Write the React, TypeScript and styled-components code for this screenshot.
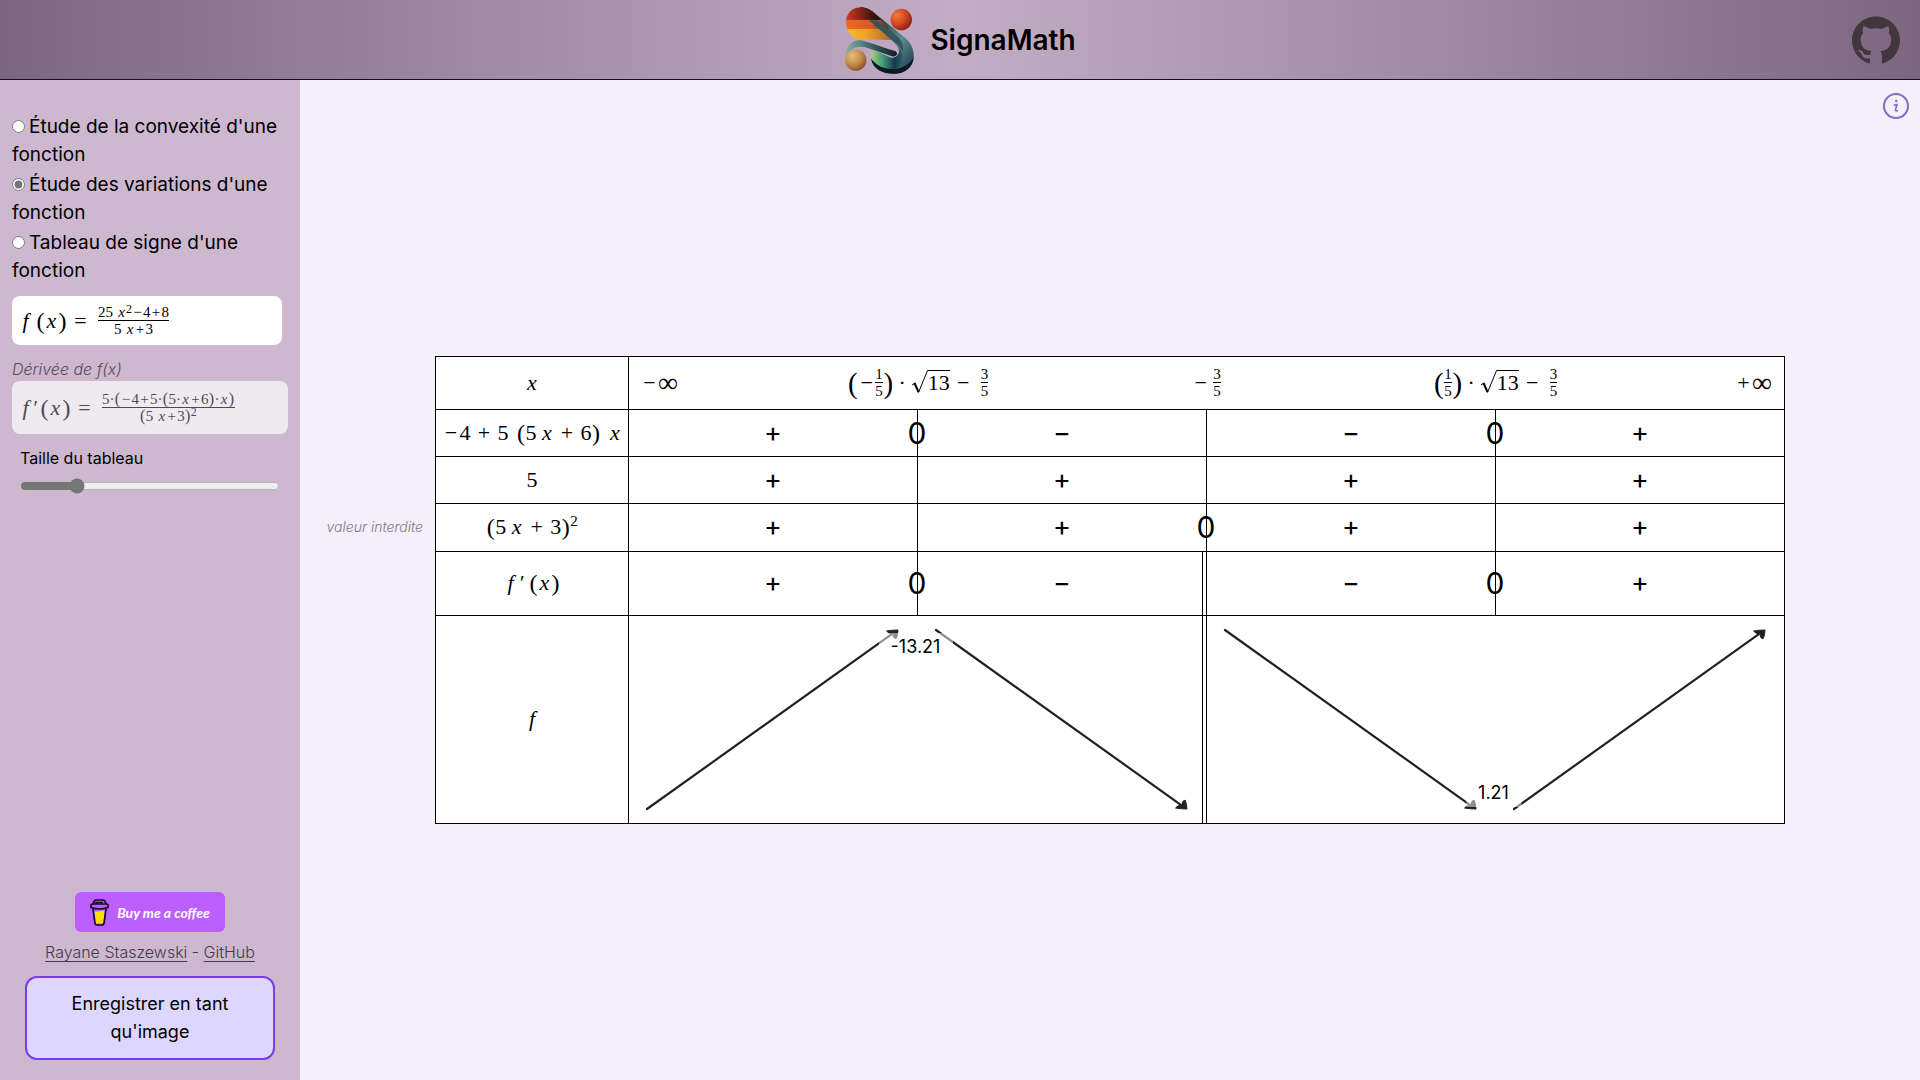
import React, { useState } from "react";
import styled, { createGlobalStyle, css } from "styled-components";

const GlobalStyle = createGlobalStyle`
  *, *::before, *::after { box-sizing: border-box; }
  body {
    margin: 0;
    font-family: Inter, "Liberation Sans", sans-serif;
    color: #000;
    background: #f5eefb;
  }
`;

const Page = styled.div`
  min-height: 100vh;
  display: flex;
  flex-direction: column;
`;

/* ---------- header ---------- */

const Header = styled.header`
  height: 80px;
  flex: none;
  display: grid;
  grid-template-columns: 1fr auto 1fr;
  align-items: center;
  padding: 0 20px;
  border-bottom: 1px solid #111020;
  background: linear-gradient(90deg, #7d667f, #c3adc5 50%, #7d667f);
`;

const Brand = styled.h1`
  grid-column: 2;
  display: flex;
  align-items: center;
  gap: 16px;
  margin: 0;
  font-size: 28px;
  line-height: 40px;
  font-weight: 600;
`;

const RepoLink = styled.a`
  justify-self: end;
  display: flex;
  color: #42363f;
`;

/* ---------- sidebar ---------- */

const Body = styled.div`
  flex: 1;
  display: flex;
`;

const Sidebar = styled.aside`
  width: 300px;
  flex: none;
  display: flex;
  flex-direction: column;
  padding: 33px 12px 20px;
  background: #cdb8cf;
`;

const Modes = styled.fieldset`
  border: 0;
  margin: 0 0 11px;
  padding: 0;
  display: flex;
  flex-direction: column;
  gap: 2px;
`;

const ModeLabel = styled.label`
  font-size: 19px;
  line-height: 28px;
`;

const Radio = styled.input`
  width: 13px;
  height: 13px;
  margin: 0 4px 0 0;
  accent-color: #767676;
`;

const FormulaBox = styled.div<{ $muted?: boolean }>`
  display: flex;
  align-items: center;
  height: ${(p) => (p.$muted ? 53 : 49)}px;
  margin-right: ${(p) => (p.$muted ? 0 : 6)}px;
  padding: 0 7px;
  border-radius: 8px;
  color: ${(p) => (p.$muted ? "#4f4a51" : "#000")};
  background: ${(p) => (p.$muted ? "#efe9f0" : "#fff")};
`;

const Caption = styled.p`
  margin: 12px 0 0;
  font-size: 16px;
  line-height: 24px;
  font-style: italic;
  font-weight: 300;
  color: #574d5a;
`;

const SizeControl = styled.div`
  display: flex;
  flex-direction: column;
  gap: 8px;
  padding: 12px 8px;
  font-size: 16px;
  line-height: 24px;
`;

const Slider = styled.input`
  width: 100%;
  height: 16px;
  margin: 0;
  accent-color: #767676;
`;

const Footer = styled.footer`
  margin-top: auto;
  display: flex;
  flex-direction: column;
  align-items: center;
  gap: 8px;
`;

const Coffee = styled.a`
  display: flex;
  align-items: center;
  justify-content: center;
  gap: 8px;
  width: 150px;
  height: 40px;
  border-radius: 6px;
  background: #bd5fff;
  color: #fff;
  font: italic 700 14px Lato, sans-serif;
  text-decoration: none;
  white-space: nowrap;
`;

const Credits = styled.p`
  margin: 0;
  font-size: 16px;
  line-height: 24px;
  font-weight: 300;
  color: #3f3b50;
  a { color: inherit; text-underline-offset: 3px; }
`;

const SaveButton = styled.button`
  width: 250px;
  margin-top: 4px;
  padding: 12px 32px;
  border: 2px solid #7c3aed;
  border-radius: 12px;
  background: #ddd6fe;
  color: #000;
  font-family: inherit;
  font-size: 18px;
  line-height: 28px;
`;

/* ---------- math ---------- */

const mathFont = css`
  font-family: "Liberation Serif", serif;
  font-size: 22px;
  line-height: 24px;
`;

const MathRow = styled.span`
  ${mathFont}
  display: inline-flex;
  align-items: center;
  white-space: nowrap;
`;

const Var = styled.i`
  width: 13px;
  text-align: center;
`;

const Prime = styled.i`
  width: 8px;
`;

const Infinity = styled.span`
  font-size: 28px;
`;

const Paren = styled.span<{ $tall?: boolean }>`
  width: ${(p) => (p.$tall ? 11 : 9)}px;
  text-align: center;
  font-size: ${(p) => (p.$tall ? 29 : 24)}px;
`;

const Op = styled.span<{ $unary?: boolean }>`
  width: 17px;
  margin: 0 ${(p) => (p.$unary ? 0 : 5)}px;
  text-align: center;
`;

const Space = styled.span`
  width: 4px;
`;

const Sup = styled.sup`
  align-self: flex-start;
  font-size: 15px;
  line-height: 12px;
`;

const Line = styled.span`
  display: flex;
  align-items: center;
  height: 16px;
`;

const FracBox = styled.span`
  display: inline-flex;
  flex-direction: column;
  align-items: center;
  font-size: 15px;
  line-height: 16px;

  ${Line}:first-child { border-bottom: 1px solid currentColor; }
  ${Var} { width: 9px; }
  ${Paren} { width: 6px; font-size: 16px; }
  ${Op} { width: 11px; margin: 0; }
  ${Sup} { font-size: 12px; line-height: 8px; }
`;

const Radicand = styled.span`
  display: inline-flex;
  align-items: flex-start;
  svg { display: block; }
`;

const RootBody = styled.span`
  border-top: 1px solid currentColor;
`;

const Frac = ({ top, bottom }: { top: React.ReactNode; bottom: React.ReactNode }) => (
  <FracBox>
    <Line>{top}</Line>
    <Line>{bottom}</Line>
  </FracBox>
);

const Sqrt = ({ children }: { children: React.ReactNode }) => (
  <Radicand>
    <svg width="17" height="24" viewBox="0 0 17 24" fill="none" stroke="currentColor" aria-hidden="true">
      <path d="M1 15l3-2" strokeWidth="1" />
      <path d="M3.500 13l4 9" strokeWidth="2" />
      <path d="M7.500 22.500L16.500 .5H17" strokeWidth="1" />
    </svg>
    <RootBody>{children}</RootBody>
  </Radicand>
);

const Root = ({ negative }: { negative?: boolean }) => (
  <MathRow>
    <Paren $tall>(</Paren>
    {negative && <Op $unary>−</Op>}
    <Frac top="1" bottom="5" />
    <Paren $tall>)</Paren>
    <Op $unary>·</Op>
    <Sqrt>13</Sqrt>
    <Op>−</Op><Space />
    <Frac top="3" bottom="5" />
  </MathRow>
);

/* ---------- table ---------- */

const Main = styled.main`
  position: relative;
  flex: 1;
  min-width: 0;
  display: flex;
  flex-direction: column;
  align-items: center;
  justify-content: center;
  padding-top: 19px;
`;

const InfoButton = styled.button`
  position: absolute;
  top: 13px;
  right: 11px;
  display: flex;
  padding: 0;
  border: 0;
  background: none;
  color: #7a70c8;
`;

const VariationTable = styled.table`
  width: calc(100% - 270px);
  table-layout: fixed;
  border-collapse: collapse;
  background: #fff;
`;

const Row = styled.tr<{ $height: number }>`
  height: ${(p) => p.$height}px;
  border: 1px solid #000;
`;

const HeadCell = styled.th`
  position: relative;
  padding: 0;
  border-right: 1px solid #000;
  font-weight: 400;
  text-align: center;
`;

const ValuesCell = styled.td`
  padding: 0;
`;

const Values = styled.div`
  display: grid;
  grid-template-columns: minmax(0, 1fr) repeat(3, minmax(0, 2fr)) minmax(0, 1fr);
  align-items: center;
  justify-items: center;
  & > :first-child { justify-self: start; margin-left: 12px; }
  & > :last-child { justify-self: end; margin-right: 12px; }
`;

const Cell = styled.td<{ $line?: boolean; $double?: boolean }>`
  position: relative;
  padding: 0;
  text-align: center;
  font-size: 27px;
  line-height: 32px;
  font-weight: 400;
  border-right: ${(p) => (p.$line || p.$double ? "1px solid #000" : "0")};
  ${(p) =>
    p.$double &&
    css`
      &::after {
        content: "";
        position: absolute;
        inset: 0 3px 0 auto;
        border-right: 1px solid #000;
      }
    `}
`;

const Zero = styled.span`
  position: absolute;
  z-index: 1;
  top: 50%;
  right: 0;
  transform: translate(50%, -50%);
  font-size: 30px;
`;

const Extremum = styled.span<{ $low?: boolean }>`
  position: absolute;
  z-index: 1;
  right: 2px;
  ${(p) => (p.$low ? "bottom: 16px;" : "top: 17px;")}
  transform: translateX(50%);
  padding: 0 12px;
  font-size: 18px;
  line-height: 28px;
  background: rgba(255, 255, 255, 0.5);
`;

const Forbidden = styled.span`
  position: absolute;
  right: calc(100% + 13px);
  top: 50%;
  transform: translateY(-50%);
  font-size: 14px;
  line-height: 16px;
  font-style: italic;
  font-weight: 300;
  white-space: nowrap;
  color: #7f7884;
`;

const ArrowBox = styled.div`
  padding: 12px 18px 12px 16px;
  svg { display: block; width: 100%; height: 183px; }
`;

const Arrow = ({ up }: { up?: boolean }) => (
  <ArrowBox>
    <svg viewBox="0 0 256 184" preserveAspectRatio="none" fill="none" stroke="#1f2222" aria-hidden="true">
      <g transform={up ? "translate(0 184) scale(1 -1)" : undefined}>
        <path d="M2 2L250 179" strokeWidth="2.200" strokeLinecap="round" />
        <path d="M243 181Q249 182 254.500 182Q254.500 177 252.500 173Q249 174 249.500 178Q245 178 243 181Z" fill="#1f2222" strokeWidth="1" />
      </g>
    </svg>
  </ArrowBox>
);

type SignRow = { label: React.ReactNode; height: number; signs: string[]; zeros: number[]; note?: string; double?: boolean };

const signRows: SignRow[] = [
  {
    label: (
      <MathRow>
        <Op $unary>−</Op>4<Op>+</Op>5<Space /><Space /><Paren>(</Paren>5<Space /><Var>x</Var><Op>+</Op>6
        <Paren>)</Paren><Space /><Space /><Var>x</Var>
      </MathRow>
    ),
    height: 47, signs: ["+", "−", "−", "+"], zeros: [0, 2],
  },
  { label: <MathRow>5</MathRow>, height: 47, signs: ["+", "+", "+", "+"], zeros: [] },
  {
    label: (
      <MathRow>
        <Paren>(</Paren>5<Space /><Var>x</Var><Op>+</Op>3<Paren>)</Paren><Sup>2</Sup>
      </MathRow>
    ),
    height: 48, signs: ["+", "+", "+", "+"], zeros: [1], note: "valeur interdite",
  },
  {
    label: (
      <MathRow><Var>f</Var><Prime>′</Prime><Space /><Paren>(</Paren><Var>x</Var><Paren>)</Paren></MathRow>
    ),
    height: 64, signs: ["+", "−", "−", "+"], zeros: [0, 2], double: true,
  },
];

/* ---------- drawings ---------- */

const Logo = () => (
  <svg width="70" height="69" viewBox="74 16 209 205" aria-hidden="true">
    <defs>
      <linearGradient id="lgTube" x1="0" y1="0" x2="1" y2="1">
        <stop offset="0" stopColor="#16110f" />
        <stop offset=".3" stopColor="#2c3f43" />
        <stop offset=".62" stopColor="#5f8d90" />
        <stop offset="1" stopColor="#12303e" />
      </linearGradient>
      <linearGradient id="lgRed" x1="0" x2="1"><stop offset="0" stopColor="#d83a20" /><stop offset=".65" stopColor="#2b100e" /><stop offset="1" stopColor="#171314" /></linearGradient>
      <linearGradient id="lgOrange" x1="0" x2="1"><stop offset="0" stopColor="#f06a24" /><stop offset=".55" stopColor="#d65a22" /><stop offset="1" stopColor="#3b2d2a" /></linearGradient>
      <linearGradient id="lgYellow" x1="0" x2="1"><stop offset="0" stopColor="#f8bc2c" /><stop offset=".45" stopColor="#efa226" /><stop offset="1" stopColor="#a9672a" /></linearGradient>
      <radialGradient id="lgBall" cx=".3" cy=".3" r=".8"><stop offset="0" stopColor="#f47a3a" /><stop offset=".55" stopColor="#cf4420" /><stop offset="1" stopColor="#7d1d12" /></radialGradient>
      <radialGradient id="lgTan" cx=".35" cy=".3" r=".8"><stop offset="0" stopColor="#e8bd7c" /><stop offset=".55" stopColor="#c08848" /><stop offset="1" stopColor="#74441f" /></radialGradient>
      <linearGradient id="lgGreen" x1="0" x2="1"><stop offset="0" stopColor="#a5d27a" /><stop offset=".4" stopColor="#3f9578" /><stop offset=".75" stopColor="#123b4c" /><stop offset="1" stopColor="#2c5d6b" /></linearGradient>
      <linearGradient id="lgThin" x1="0" x2="1"><stop offset="0" stopColor="#86b3a2" /><stop offset=".45" stopColor="#3f6a70" /><stop offset="1" stopColor="#101c24" /></linearGradient>
      <clipPath id="cpTop"><path d="M122 22C98 22 80 42 80 66C80 92 98 118 124 118L215 120L205 82L160 36C150 27 138 22 122 22Z" /></clipPath>
    </defs>
    <path d="M122 22C142 22 152 29 166 40L256 113C274 128 283 146 282 170C281 202 255 221 222 221C190 221 160 207 155 176C178 207 239 206 240 162C239 146 230 132 215 120L146 65Z" fill="url(#lgTube)" />
    <path d="M155 176C160 207 190 221 222 221C255 221 281 202 282 170C274 190 250 206 225 206C190 206 169 194 155 176Z" fill="#0d1822" />
    <g clipPath="url(#cpTop)">
      <rect x="78" y="20" width="140" height="41" fill="url(#lgRed)" />
      <rect x="78" y="60" width="140" height="28" fill="url(#lgOrange)" />
      <rect x="78" y="87" width="140" height="34" fill="url(#lgYellow)" />
    </g>
    <path d="M148 61L172 61L236 112C247 124 253 140 249 155C240 137 222 124 206 111Z" fill="#36555a" />
    <path d="M154 157C180 149 198 171 218 173C234 173 240 158 239 147C256 160 252 206 220 206C184 206 156 190 154 157Z" fill="url(#lgGreen)" />
    <path d="M78 168C79 139 97 121 121 121C140 122 190 144 227 153C237 160 232 170 220 169L145 144C116 133 91 147 78 168Z" fill="url(#lgThin)" />
    <circle cx="245" cy="59" r="32" fill="url(#lgBall)" />
    <circle cx="109" cy="180" r="32" fill="url(#lgTan)" />
  </svg>
);

const GitHubMark = () => (
  <svg width="48" height="48" viewBox="0 0 24 24" fill="currentColor" aria-hidden="true">
    <path d="M12 .297c-6.630 0-12 5.373-12 12 0 5.303 3.438 9.800 8.205 11.385.6.113.82-.258.82-.577 0-.285-.01-1.040-.015-2.040-3.338.724-4.042-1.610-4.042-1.610C4.422 18.070 3.633 17.700 3.633 17.700c-1.087-.744.084-.729.084-.729 1.205.084 1.838 1.236 1.838 1.236 1.070 1.835 2.809 1.305 3.495.998.108-.776.417-1.305.76-1.605-2.665-.3-5.466-1.332-5.466-5.930 0-1.310.465-2.380 1.235-3.220-.135-.303-.54-1.523.105-3.176 0 0 1.005-.322 3.300 1.230.96-.267 1.980-.399 3-.405 1.020.006 2.040.138 3 .405 2.280-1.552 3.285-1.230 3.285-1.230.645 1.653.24 2.873.12 3.176.765.84 1.230 1.910 1.230 3.220 0 4.610-2.805 5.625-5.475 5.920.42.36.81 1.096.81 2.220 0 1.606-.015 2.896-.015 3.286 0 .315.21.69.825.57C20.565 22.092 24 17.592 24 12.297c0-6.627-5.373-12-12-12" />
  </svg>
);

const InfoIcon = () => (
  <svg width="26" height="26" viewBox="0 0 26 26" fill="none" stroke="currentColor" strokeWidth="2" aria-hidden="true">
    <circle cx="13" cy="13" r="12" />
    <path d="M11 12.500Q12 11.500 14 11.500L12.500 16.500Q12 18.500 15 17.500" strokeWidth="1.600" />
    <circle cx="13.300" cy="8" r="1.200" fill="currentColor" stroke="none" />
  </svg>
);

const Cup = () => (
  <svg width="19" height="27" viewBox="0 0 19 27" stroke="#0d0c22" strokeWidth="1.700" strokeLinejoin="round" fill="none" aria-hidden="true">
    <path d="M4.500 13L14.500 11.500L13.500 24.500H5.800Z" fill="#ffdd00" stroke="none" />
    <path d="M3 10L5 24.500Q5.200 26 7 26H12Q13.700 26 14 24.500L16 10" />
    <path d="M1 6.500Q1 5 3 5H16Q18 5 18 6.500V8.500Q14 10 9.500 10T1 8.500Z" />
    <path d="M3 5Q4 1 6 1H13Q15 1 16 5M5 3.500H13" />
  </svg>
);

const modes = ["Étude de la convexité d'une fonction", "Étude des variations d'une fonction", "Tableau de signe d'une fonction"];

export default function App() {
  const [mode, setMode] = useState(1);
  const [size, setSize] = useState(20);

  return (
    <Page>
      <GlobalStyle />
      <Header>
        <Brand><Logo />SignaMath</Brand>
        <RepoLink href="#github" aria-label="GitHub"><GitHubMark /></RepoLink>
      </Header>
      <Body>
        <Sidebar>
          <Modes>
            {modes.map((label, i) => (
              <ModeLabel key={label} htmlFor={`mode-${i}`}>
                <Radio type="radio" id={`mode-${i}`} name="mode" checked={mode === i} onChange={() => setMode(i)} />
                {label}
              </ModeLabel>
            ))}
          </Modes>
          <FormulaBox>
            <MathRow>
              <Var>f</Var><Space /><Paren>(</Paren><Var>x</Var><Paren>)</Paren><Op>=</Op><Space />
              <Frac
                top={<>25<Space /><Var>x</Var><Sup>2</Sup><Op>−</Op>4<Op>+</Op>8</>}
                bottom={<>5<Space /><Var>x</Var><Op>+</Op>3</>}
              />
            </MathRow>
          </FormulaBox>
          <Caption>Dérivée de f(x)</Caption>
          <FormulaBox $muted>
            <MathRow>
              <Var>f</Var><Prime>′</Prime><Paren>(</Paren><Var>x</Var><Paren>)</Paren><Op>=</Op><Space />
              <Frac
                top={<>5·<Paren>(</Paren><Op>−</Op>4<Op>+</Op>5·<Paren>(</Paren>5·<Var>x</Var><Op>+</Op>6<Paren>)</Paren>·<Var>x</Var><Paren>)</Paren></>}
                bottom={<><Paren>(</Paren>5<Space /><Var>x</Var><Op>+</Op>3<Paren>)</Paren><Sup>2</Sup></>}
              />
            </MathRow>
          </FormulaBox>
          <SizeControl>
            <label htmlFor="table-size">Taille du tableau</label>
            <Slider id="table-size" type="range" value={size} onChange={(e) => setSize(Number(e.target.value))} />
          </SizeControl>
          <Footer>
            <Coffee href="#coffee"><Cup />Buy me a coffee</Coffee>
            <Credits><a href="#author">Rayane Staszewski</a> - <a href="#repo">GitHub</a></Credits>
            <SaveButton type="button">Enregistrer en tant qu'image</SaveButton>
          </Footer>
        </Sidebar>
        <Main>
          <InfoButton type="button" aria-label="Informations"><InfoIcon /></InfoButton>
          <VariationTable>
            <colgroup>
              <col width="193" /><col /><col /><col /><col />
            </colgroup>
            <tbody>
              <Row $height={53}>
                <HeadCell scope="row"><MathRow><Var>x</Var></MathRow></HeadCell>
                <ValuesCell colSpan={4}>
                  <Values>
                    <MathRow><Op $unary>−</Op><Infinity>∞</Infinity></MathRow>
                    <Root negative />
                    <MathRow><Op $unary>−</Op><Space /><Frac top="3" bottom="5" /></MathRow>
                    <Root />
                    <MathRow><Op $unary>+</Op><Infinity>∞</Infinity></MathRow>
                  </Values>
                </ValuesCell>
              </Row>
              {signRows.map((row, r) => (
                <Row key={r} $height={row.height}>
                  <HeadCell scope="row">
                    {row.note && <Forbidden>{row.note}</Forbidden>}
                    {row.label}
                  </HeadCell>
                  {row.signs.map((sign, i) => (
                    <Cell key={i} $line={i < 3} $double={row.double && i === 1}>
                      {sign}
                      {row.zeros.includes(i) && <Zero>0</Zero>}
                    </Cell>
                  ))}
                </Row>
              ))}
              <Row $height={207}>
                <HeadCell scope="row"><MathRow><Var>f</Var></MathRow></HeadCell>
                <Cell><Arrow up /><Extremum>-13.21</Extremum></Cell>
                <Cell $double><Arrow /></Cell>
                <Cell><Arrow /><Extremum $low>1.21</Extremum></Cell>
                <Cell><Arrow up /></Cell>
              </Row>
            </tbody>
          </VariationTable>
        </Main>
      </Body>
    </Page>
  );
}
